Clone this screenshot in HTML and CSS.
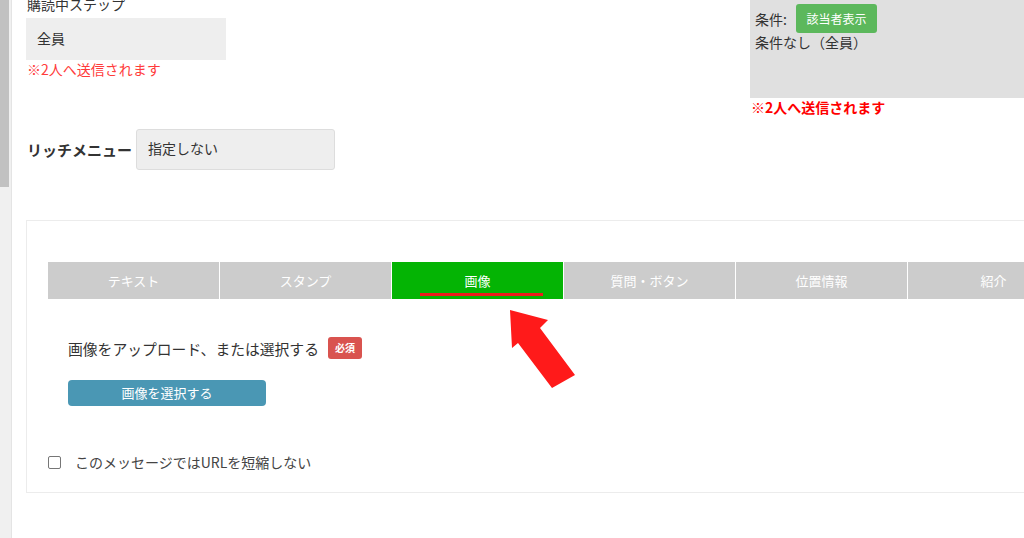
FILE: index.html
```html
<!DOCTYPE html>
<html lang="ja">
<head>
<meta charset="utf-8">
<link rel="stylesheet" href="styles.css">
</head>
<body>
<div class="page">
  <div class="scroll"><div class="thumb"></div></div>
  <main class="content">
    <section class="top">
      <div class="step">
        <div class="label">購読中ステップ</div>
        <div class="field">全員</div>
        <div class="note">※2人へ送信されます</div>
      </div>
      <div class="cond-wrap">
        <div class="cond">
          <div class="cond-row"><span>条件:</span><span class="btn-green">該当者表示</span></div>
          <div class="cond-text">条件なし（全員）</div>
        </div>
        <div class="note strong">※2人へ送信されます</div>
      </div>
    </section>

    <div class="rich">
      <span class="rich-label">リッチメニュー</span>
      <div class="rich-box">指定しない</div>
    </div>

    <section class="panel">
      <div class="tabs">
        <div class="tab">テキスト</div>
        <div class="tab">スタンプ</div>
        <div class="tab active">画像<span class="mark"></span></div>
        <div class="tab">質問・ボタン</div>
        <div class="tab">位置情報</div>
        <div class="tab">紹介</div>
      </div>
      <div class="upload">
        <div class="upload-row"><span class="upload-label">画像をアップロード、または選択する</span><span class="badge">必須</span></div>
        <div class="btn-blue">画像を選択する</div>
      </div>
      <label class="check"><span class="box"></span><span>このメッセージではURLを短縮しない</span></label>
    </section>
  </main>
  <svg class="arrow" width="1024" height="538" viewBox="0 0 1024 538">
    <polygon points="510,310 548,320 540,328 575,375 552,388 518,343 512,348" fill="#ff1a1a"/>
  </svg>
</div>
</body>
</html>
```

FILE: styles.css
```css
* { box-sizing: border-box; }
html, body { margin: 0; padding: 0; background: #fff; }
body {
  font-family: "Noto Sans CJK JP", "Noto Sans", sans-serif;
  font-size: 14px;
  color: #333;
}
.page {
  position: relative;
  display: flex;
  width: 1024px;
  height: 538px;
  overflow: hidden;
}
.scroll {
  width: 12px;
  flex: none;
  background: #f0f0f0;
  border-right: 1px solid #e4e4e4;
}
.thumb {
  width: 9px;
  height: 187px;
  background: #c1c1c1;
}
.content {
  flex: 1;
  min-width: 0;
  padding-left: 14px;
}
.top {
  display: flex;
  justify-content: space-between;
  align-items: flex-start;
}
.step { width: 200px; }
.label {
  margin-top: -6px;
  line-height: 20px;
  padding-left: 1px;
}
.field {
  margin-top: 4px;
  height: 42px;
  background: #eee;
  padding-left: 11px;
  line-height: 40px;
}
.note {
  color: #ff3b3b;
  line-height: 19px;
  padding-left: 1px;
}
.cond-wrap { width: 274px; }
.cond {
  height: 98px;
  background: #e0e0e0;
  padding: 4px 5px;
}
.cond-row {
  display: flex;
  align-items: center;
  gap: 9px;
  height: 29px;
}
.btn-green {
  display: inline-block;
  width: 81px;
  height: 29px;
  line-height: 29px;
  text-align: center;
  background: #5cb85c;
  color: #fff;
  font-size: 12px;
  border-radius: 3px;
}
.cond-text { line-height: 19px; }
.note.strong {
  color: #ff0000;
  font-weight: bold;
  line-height: 18px;
}
.rich {
  margin-top: 13px;
  display: flex;
  align-items: center;
  gap: 4px;
}
.rich-label {
  font-weight: bold;
  font-size: 15px;
  padding-left: 1px;
}
.rich-box {
  width: 199px;
  height: 41px;
  background: #eee;
  border: 1px solid #ddd;
  border-radius: 3px;
  padding-left: 11px;
  line-height: 36px;
}
.panel {
  margin-top: 50px;
  margin-right: -20px;
  border: 1px solid #ececec;
  padding: 41px 0 20px 21px;
}
.tabs {
  display: grid;
  grid-template-columns: repeat(6, 171px);
  gap: 1px;
  height: 37px;
}
.tab {
  position: relative;
  background: #cccccc;
  color: #fff;
  font-size: 13px;
  line-height: 37px;
  text-align: center;
}
.tab.active { background: #04b404; }
.mark {
  position: absolute;
  left: 28px;
  top: 31px;
  width: 123px;
  height: 3px;
  background: #ee1c1c;
}
.upload {
  margin-top: 38px;
  padding-left: 20px;
}
.upload-row {
  display: flex;
  align-items: center;
  gap: 9px;
  height: 22px;
}
.upload-label { font-size: 14.8px; }
.badge {
  display: inline-block;
  width: 34px;
  height: 22px;
  line-height: 22px;
  text-align: center;
  background: #d9534f;
  color: #fff;
  font-size: 10px;
  font-weight: bold;
  border-radius: 3px;
}
.btn-blue {
  margin-top: 21px;
  width: 198px;
  height: 26px;
  line-height: 26px;
  text-align: center;
  background: #4a97b4;
  color: #fff;
  font-size: 13px;
  border-radius: 4px;
}
.check {
  margin-top: 46px;
  display: flex;
  align-items: center;
  gap: 14px;
  line-height: 20px;
  color: #444;
}
.box {
  width: 13px;
  height: 13px;
  border: 1px solid #767676;
  border-radius: 2px;
  background: #fff;
}
.arrow {
  position: absolute;
  left: 0;
  top: 0;
  pointer-events: none;
}
```
